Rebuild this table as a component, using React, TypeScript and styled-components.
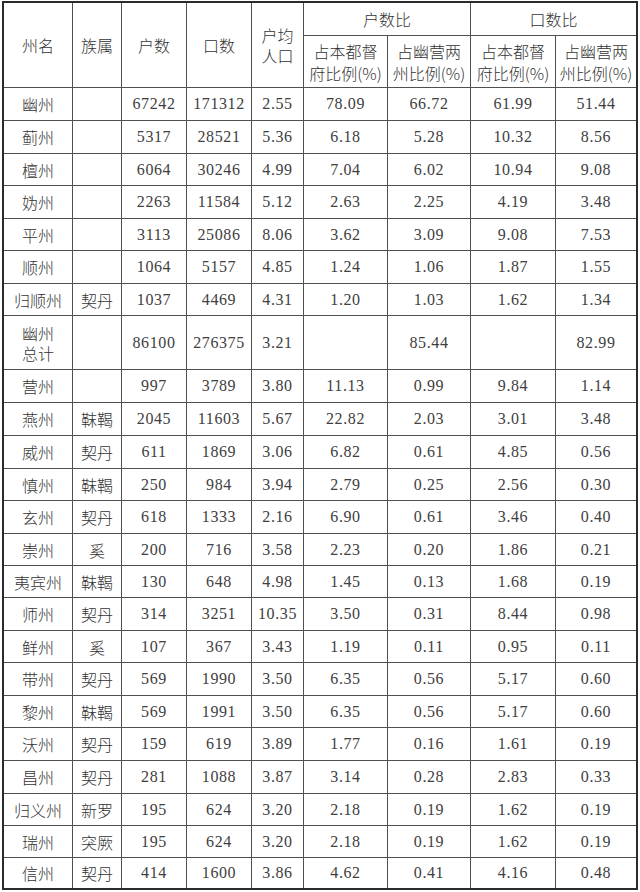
import React from "react";
import styled, { createGlobalStyle } from "styled-components";

const Global = createGlobalStyle`
  html, body { margin: 0; padding: 0; background: #ffffff; }
  body { width: 640px; height: 892px; overflow: hidden; }
`;

const Page = styled.div`
  padding: 1px 0 0 2px;
  background: #ffffff;
`;

const Grid = styled.div<{ $rows: string }>`
  display: grid;
  width: max-content;
  grid-template-columns: 68px 48px 64px 64px 51px 83px 82px 84px 80px;
  grid-template-rows: ${(p) => p.$rows};
  gap: 1px;
  background: #505050;
  border: 2px solid #2b2b2b;
`;

const Cell = styled.div<{ $span?: number; $colSpan?: number; $num?: boolean; $lh?: number }>`
  background: #ffffff;
  display: flex;
  align-items: center;
  justify-content: center;
  text-align: center;
  white-space: pre-line;
  grid-row: ${(p) => (p.$span ? `span ${p.$span}` : "auto")};
  grid-column: ${(p) => (p.$colSpan ? `span ${p.$colSpan}` : "auto")};
  font-family: ${(p) =>
    p.$num
      ? `"Liberation Serif", "Noto Sans CJK SC", serif`
      : `"Noto Sans CJK SC", "Liberation Serif", serif`};
  font-size: 16px;
  font-weight: ${(p) => (p.$num ? 400 : 300)};
  letter-spacing: ${(p) => (p.$num ? "0.6px" : "0")};
  line-height: ${(p) => p.$lh ?? 20}px;
  color: ${(p) => (p.$num ? "#404040" : "#333333")};
`;

const rows: string[][] = [
  ["幽州", "", "67242", "171312", "2.55", "78.09", "66.72", "61.99", "51.44"],
  ["蓟州", "", "5317", "28521", "5.36", "6.18", "5.28", "10.32", "8.56"],
  ["檀州", "", "6064", "30246", "4.99", "7.04", "6.02", "10.94", "9.08"],
  ["妫州", "", "2263", "11584", "5.12", "2.63", "2.25", "4.19", "3.48"],
  ["平州", "", "3113", "25086", "8.06", "3.62", "3.09", "9.08", "7.53"],
  ["顺州", "", "1064", "5157", "4.85", "1.24", "1.06", "1.87", "1.55"],
  ["归顺州", "契丹", "1037", "4469", "4.31", "1.20", "1.03", "1.62", "1.34"],
  ["幽州\n总计", "", "86100", "276375", "3.21", "", "85.44", "", "82.99"],
  ["营州", "", "997", "3789", "3.80", "11.13", "0.99", "9.84", "1.14"],
  ["燕州", "靺鞨", "2045", "11603", "5.67", "22.82", "2.03", "3.01", "3.48"],
  ["威州", "契丹", "611", "1869", "3.06", "6.82", "0.61", "4.85", "0.56"],
  ["慎州", "靺鞨", "250", "984", "3.94", "2.79", "0.25", "2.56", "0.30"],
  ["玄州", "契丹", "618", "1333", "2.16", "6.90", "0.61", "3.46", "0.40"],
  ["崇州", "奚", "200", "716", "3.58", "2.23", "0.20", "1.86", "0.21"],
  ["夷宾州", "靺鞨", "130", "648", "4.98", "1.45", "0.13", "1.68", "0.19"],
  ["师州", "契丹", "314", "3251", "10.35", "3.50", "0.31", "8.44", "0.98"],
  ["鲜州", "奚", "107", "367", "3.43", "1.19", "0.11", "0.95", "0.11"],
  ["带州", "契丹", "569", "1990", "3.50", "6.35", "0.56", "5.17", "0.60"],
  ["黎州", "靺鞨", "569", "1991", "3.50", "6.35", "0.56", "5.17", "0.60"],
  ["沃州", "契丹", "159", "619", "3.89", "1.77", "0.16", "1.61", "0.19"],
  ["昌州", "契丹", "281", "1088", "3.87", "3.14", "0.28", "2.83", "0.33"],
  ["归义州", "新罗", "195", "624", "3.20", "2.18", "0.19", "1.62", "0.19"],
  ["瑞州", "突厥", "195", "624", "3.20", "2.18", "0.19", "1.62", "0.19"],
  ["信州", "契丹", "414", "1600", "3.86", "4.62", "0.41", "4.16", "0.48"],
];

const rowHeights = [32, 32, 31, 32, 31, 32, 31, 53, 32, 32, 32, 31, 32, 31, 31, 32, 31, 32, 31, 32, 32, 31, 31, 30];
const template = ["32px", "51px", ...rowHeights.map((h) => `${h}px`)].join(" ");

export default function App() {
  return (
    <Page>
      <Global />
      <Grid $rows={template}>
        <Cell $span={2}>州名</Cell>
        <Cell $span={2}>族属</Cell>
        <Cell $span={2}>户数</Cell>
        <Cell $span={2}>口数</Cell>
        <Cell $span={2}>{"户均\n人口"}</Cell>
        <Cell $colSpan={2}>户数比</Cell>
        <Cell $colSpan={2}>口数比</Cell>
        <Cell $lh={22}>{"占本都督\n府比例(%)"}</Cell>
        <Cell $lh={22}>{"占幽营两\n州比例(%)"}</Cell>
        <Cell $lh={22}>{"占本都督\n府比例(%)"}</Cell>
        <Cell $lh={22}>{"占幽营两\n州比例(%)"}</Cell>
        {rows.map((r, i) =>
          r.map((v, j) => (
            <Cell key={`${i}-${j}`} $num={j >= 2}>
              {v}
            </Cell>
          ))
        )}
      </Grid>
    </Page>
  );
}
